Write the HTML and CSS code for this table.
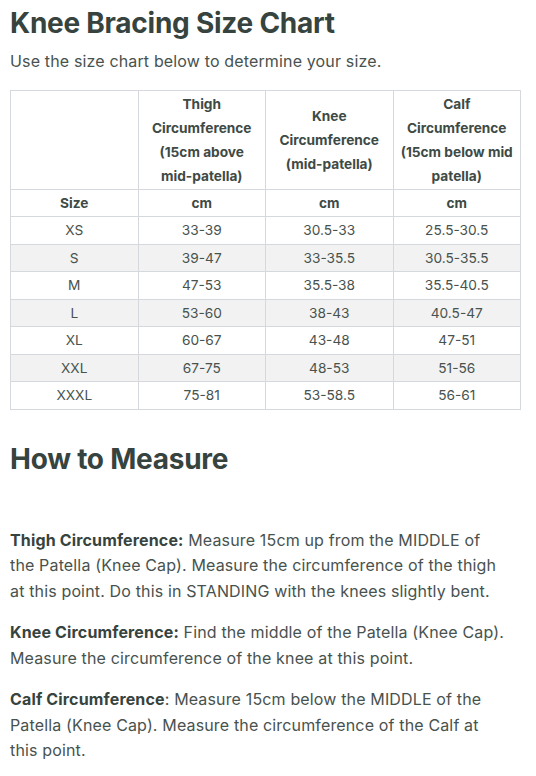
FILE: index.html
```html
<!DOCTYPE html>
<html lang="en">

<head>
    <meta charset="UTF-8">
    <meta name="viewport" content="width=device-width, initial-scale=1.0">
    <title>Knee Bracing Size Chart</title>
    <link rel="stylesheet" href="styles.css">
</head>

<body>
    <h1 class="title">Knee Bracing Size Chart</h1>
    <p class="intro">Use the size chart below to determine your size.</p>

    <table class="size-chart">
        <thead>
            <tr>
                <th></th>
                <th>Thigh Circumference (15cm above mid-patella)</th>
                <th>Knee Circumference (mid-patella)</th>
                <th>Calf Circumference (15cm below mid patella)</th>
            </tr>
            <tr>
                <th>Size</th>
                <th>cm</th>
                <th>cm</th>
                <th>cm</th>
            </tr>
        </thead>
        <tbody>
            <tr><td>XS</td><td>33-39</td><td>30.5-33</td><td>25.5-30.5</td></tr>
            <tr><td>S</td><td>39-47</td><td>33-35.5</td><td>30.5-35.5</td></tr>
            <tr><td>M</td><td>47-53</td><td>35.5-38</td><td>35.5-40.5</td></tr>
            <tr><td>L</td><td>53-60</td><td>38-43</td><td>40.5-47</td></tr>
            <tr><td>XL</td><td>60-67</td><td>43-48</td><td>47-51</td></tr>
            <tr><td>XXL</td><td>67-75</td><td>48-53</td><td>51-56</td></tr>
            <tr><td>XXXL</td><td>75-81</td><td>53-58.5</td><td>56-61</td></tr>
        </tbody>
    </table>

    <h2 class="title section">How to Measure</h2>

    <div class="steps">
        <p><strong>Thigh Circumference:</strong> Measure 15cm up from the MIDDLE of the Patella (Knee Cap). Measure the circumference of the thigh at this point. Do this in STANDING with the knees slightly bent.</p>
        <p><strong>Knee Circumference:</strong> Find the middle of the Patella (Knee Cap). Measure the circumference of the knee at this point.</p>
        <p><strong>Calf Circumference</strong>: Measure 15cm below the MIDDLE of the Patella (Knee Cap). Measure the circumference of the Calf at this point.</p>
    </div>
</body>

</html>
```

FILE: styles.css
```css
body {
    margin: 0;
    padding: 0 10px;
    font-family: Inter, "Noto Sans", sans-serif;
    color: #48524e;
    background-color: #fff;
}

.title {
    margin: 0;
    font-size: 28px;
    font-weight: 700;
    letter-spacing: -0.25px;
    color: #36433e;
}

h1.title {
    padding-top: 6px;
    line-height: 34px;
}

.intro {
    margin: 9px 0 0;
    font-size: 16px;
    line-height: 24px;
    letter-spacing: 0.15px;
}

.size-chart {
    width: 511px;
    margin-top: 17px;
    border-collapse: collapse;
    table-layout: fixed;
    font-size: 13.7px;
    text-align: center;
}

.size-chart th,
.size-chart td {
    border: 1px solid #d5d8dc;
    padding: 1px 6px;
    line-height: 24px;
}

.size-chart td {
    padding: 1.25px 6px;
}

.size-chart th {
    font-weight: 700;
    color: #3e4a45;
}

.size-chart tbody tr:nth-child(even) {
    background-color: #f2f2f2;
}

.section {
    margin-top: 32px;
    line-height: 34px;
}

.steps {
    width: 496px;
    padding-top: 52px;
}

.steps p {
    margin: 0 0 16px;
    font-size: 16px;
    line-height: 25.5px;
    letter-spacing: 0.15px;
}

.steps strong {
    color: #36433e;
}
```
